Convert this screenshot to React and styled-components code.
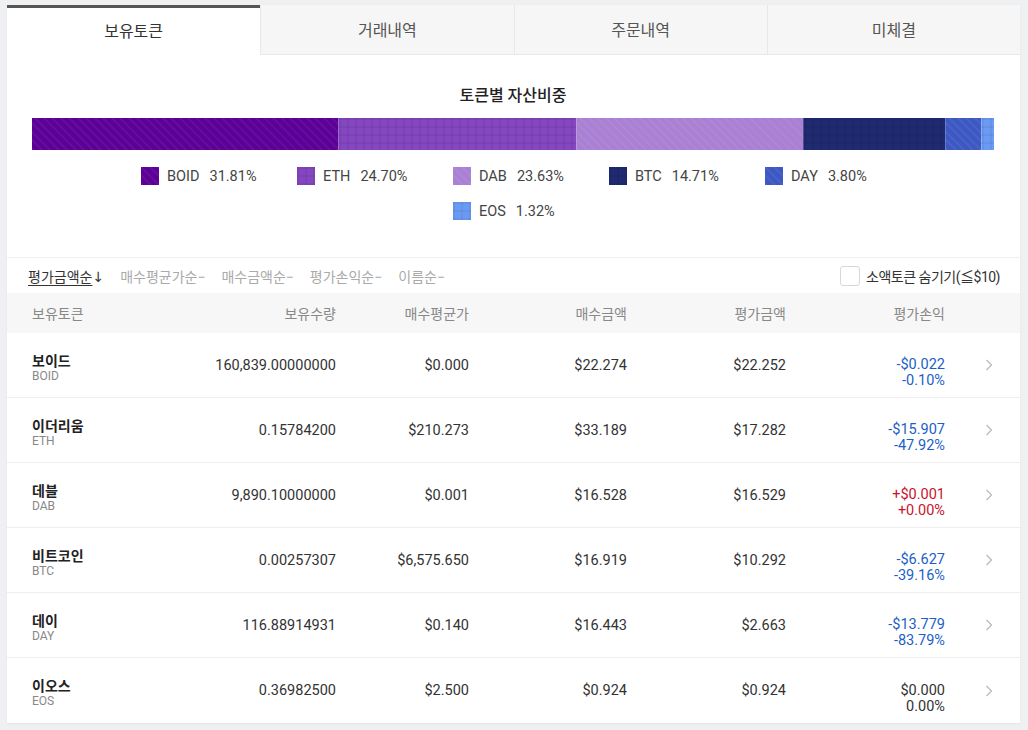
import React from 'react';
import styled, { createGlobalStyle, css } from 'styled-components';

const GlobalStyle = createGlobalStyle`
  html, body { margin: 0; padding: 0; background: #eef0f2; }
  body { font-family: Roboto, "Noto Sans CJK KR", sans-serif; color: #333; }
  * { box-sizing: border-box; }
`;

const Page = styled.div`
  padding: 5px 8px 8px 7px;
`;

const Panel = styled.div`
  width: 1013px;
  background: #fff;
  box-shadow: 0 1px 2px rgba(0, 0, 0, 0.06);
`;

const Tabs = styled.div`
  display: grid;
  grid-template-columns: repeat(4, 1fr);
  height: 50px;
`;

const Tab = styled.div`
  display: flex;
  align-items: center;
  justify-content: center;
  font-size: 16px;
  ${p => p.$active ? css`
    background: #fff;
    color: #333;
    border-top: 3px solid #555;
    padding-bottom: 4px;
  ` : css`
    background: #f6f6f6;
    color: #555;
    border-bottom: 1px solid #e8e8e8;
    border-left: 1px solid #e8e8e8;
    padding-bottom: 1px;
  `}
`;

const Chart = styled.section`
  padding: 27px 26px 37px 25px;
  border-bottom: 1px solid #f0f0f0;
`;

const ChartTitle = styled.h2`
  margin: 0 0 12px;
  text-align: center;
  font-size: 16px;
  font-weight: 500;
  color: #222;
`;

const Bar = styled.div`
  display: flex;
  height: 32px;
`;

const patterns = {
  stripe: css`
    background-image: repeating-linear-gradient(45deg, rgba(255,255,255,0.05) 0 2px, transparent 2px 6px);
  `,
  grid: css`
    background-image:
      linear-gradient(rgba(0,0,0,0.05) 2px, transparent 2px),
      linear-gradient(90deg, rgba(0,0,0,0.05) 2px, transparent 2px);
    background-size: 8px 8px;
  `,
};

const Segment = styled.div`
  height: 100%;
  background-color: ${p => p.$color};
  ${p => patterns[p.$pattern]}
  & + & { border-left: 1px solid rgba(255,255,255,0.2); }
`;

const Legend = styled.div`
  display: flex;
  flex-wrap: wrap;
  justify-content: center;
  padding: 17px 0 0 36px;
  row-gap: 17px;
`;

const LegendItem = styled.div`
  width: 156px;
  display: flex;
  align-items: center;
  font-size: 14.5px;
  color: #444;
  height: 18px;
`;

const Swatch = styled.span`
  width: 18px;
  height: 18px;
  margin-right: 8px;
  background-color: ${p => p.$color};
  ${p => patterns[p.$pattern]}
`;

const Pct = styled.span`
  margin-left: 10px;
`;

const SortBar = styled.div`
  display: flex;
  align-items: center;
  height: 35px;
  padding: 0 20px 0 21px;
`;

const SortItem = styled.span`
  font-size: 14px;
  margin-right: 16px;
  color: ${p => p.$active ? '#333' : '#aaa'};
  text-decoration: ${p => p.$active ? 'underline' : 'none'};
  text-underline-offset: 3px;
`;

const Arrow = styled.span`
  font-family: "DejaVu Sans", sans-serif;
  font-size: 14px;
  display: inline-block;
  text-decoration: none;
`;

const HideSmall = styled.label`
  margin-left: auto;
  display: flex;
  align-items: center;
  font-size: 14px;
  letter-spacing: -0.5px;
  color: #333;
`;

const Box = styled.span`
  width: 20px;
  height: 20px;
  border: 1px solid #d8d8d8;
  border-radius: 3px;
  margin-right: 6px;
`;

const Row = styled.div`
  display: grid;
  grid-template-columns: 148px 156px 133px 158px 159px 159px 75px;
  padding-left: 25px;
  align-items: center;
  ${p => p.$head ? css`
    height: 40px;
    background: #f7f7f7;
    color: #888;
    font-size: 14px;
  ` : css`
    height: 65px;
    border-bottom: 1px solid #eee;
    color: #333;
    font-size: 14.5px;
    &:last-child { border-bottom: none; }
  `}
`;

const Cell = styled.div`
  text-align: ${p => p.$left ? 'left' : 'right'};
`;

const TokenCell = styled.div`
  padding-top: 5px;
`;

const Name = styled.div`
  font-weight: 700;
  color: #222;
  font-size: 14px;
  line-height: 16px;
`;

const Symbol = styled.div`
  font-size: 12px;
  color: #888;
  line-height: 14px;
`;

const Profit = styled.div`
  text-align: right;
  line-height: 16px;
  padding-top: 16px;
  color: ${p => p.$sign < 0 ? '#1c5fc7' : p.$sign > 0 ? '#c9142c' : '#333'};
`;

const Chevron = styled.div`
  padding-left: 40px;
  color: #bbb;
  display: flex;
`;

const tokens = [
  { sym: 'BOID', pct: '31.81%', w: 306, color: '#5c0098', pattern: 'stripe' },
  { sym: 'ETH', pct: '24.70%', w: 238, color: '#8447c0', pattern: 'grid' },
  { sym: 'DAB', pct: '23.63%', w: 227, color: '#a980d3', pattern: 'stripe' },
  { sym: 'BTC', pct: '14.71%', w: 142, color: '#1f2a70', pattern: 'grid' },
  { sym: 'DAY', pct: '3.80%', w: 36, color: '#3e58c3', pattern: 'stripe' },
  { sym: 'EOS', pct: '1.32%', w: 13, color: '#6b9af5', pattern: 'grid' },
];

const rows = [
  { name: '보이드', sym: 'BOID', qty: '160,839.00000000', avg: '$0.000', buy: '$22.274', val: '$22.252', pl: '-$0.022', plp: '-0.10%', sign: -1 },
  { name: '이더리움', sym: 'ETH', qty: '0.15784200', avg: '$210.273', buy: '$33.189', val: '$17.282', pl: '-$15.907', plp: '-47.92%', sign: -1 },
  { name: '데블', sym: 'DAB', qty: '9,890.10000000', avg: '$0.001', buy: '$16.528', val: '$16.529', pl: '+$0.001', plp: '+0.00%', sign: 1 },
  { name: '비트코인', sym: 'BTC', qty: '0.00257307', avg: '$6,575.650', buy: '$16.919', val: '$10.292', pl: '-$6.627', plp: '-39.16%', sign: -1 },
  { name: '데이', sym: 'DAY', qty: '116.88914931', avg: '$0.140', buy: '$16.443', val: '$2.663', pl: '-$13.779', plp: '-83.79%', sign: -1 },
  { name: '이오스', sym: 'EOS', qty: '0.36982500', avg: '$2.500', buy: '$0.924', val: '$0.924', pl: '$0.000', plp: '0.00%', sign: 0 },
];

const ChevronIcon = () => (
  <svg width="8" height="12" viewBox="0 0 8 12" fill="none" stroke="currentColor" strokeWidth="1.3">
    <path d="M1.5 1 L6.5 6 L1.5 11" />
  </svg>
);

export default function App() {
  return (
    <Page>
      <GlobalStyle />
      <Panel>
        <Tabs>
          <Tab $active>보유토큰</Tab>
          <Tab>거래내역</Tab>
          <Tab>주문내역</Tab>
          <Tab>미체결</Tab>
        </Tabs>
        <Chart>
          <ChartTitle>토큰별 자산비중</ChartTitle>
          <Bar>
            {tokens.map(t => (
              <Segment key={t.sym} $color={t.color} $pattern={t.pattern} style={{ width: t.w }} />
            ))}
          </Bar>
          <Legend>
            {tokens.map(t => (
              <LegendItem key={t.sym}>
                <Swatch $color={t.color} $pattern={t.pattern} />
                {t.sym}<Pct>{t.pct}</Pct>
              </LegendItem>
            ))}
          </Legend>
        </Chart>
        <SortBar>
          <SortItem $active>평가금액순<Arrow>↓</Arrow></SortItem>
          <SortItem>매수평균가순−</SortItem>
          <SortItem>매수금액순−</SortItem>
          <SortItem>평가손익순−</SortItem>
          <SortItem>이름순−</SortItem>
          <HideSmall><Box />소액토큰 숨기기(≦$10)</HideSmall>
        </SortBar>
        <Row $head>
          <Cell $left>보유토큰</Cell>
          <Cell>보유수량</Cell>
          <Cell>매수평균가</Cell>
          <Cell>매수금액</Cell>
          <Cell>평가금액</Cell>
          <Cell>평가손익</Cell>
          <Cell />
        </Row>
        {rows.map(r => (
          <Row key={r.sym}>
            <TokenCell>
              <Name>{r.name}</Name>
              <Symbol>{r.sym}</Symbol>
            </TokenCell>
            <Cell>{r.qty}</Cell>
            <Cell>{r.avg}</Cell>
            <Cell>{r.buy}</Cell>
            <Cell>{r.val}</Cell>
            <Profit $sign={r.sign}>
              <div>{r.pl}</div>
              <div>{r.plp}</div>
            </Profit>
            <Chevron><ChevronIcon /></Chevron>
          </Row>
        ))}
      </Panel>
    </Page>
  );
}
